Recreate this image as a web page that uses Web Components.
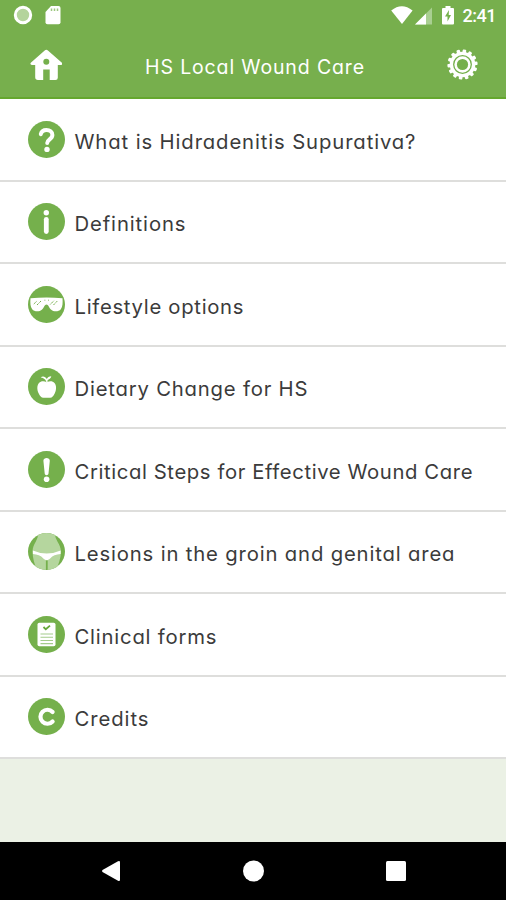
<!DOCTYPE html>
<html lang="en"><head><meta charset="utf-8"><title>HS Local Wound Care</title>
<style>
html,body{margin:0;height:100%}
body{font-family:Inter,"Liberation Sans",sans-serif;background:#ebf1e5;overflow:hidden}
</style></head><body>
<wound-app></wound-app>
<script>
// Text whose letter-spacing is adjusted so that it spans a given width.
class FitText extends HTMLElement{
  connectedCallback(){
    const r=this.attachShadow({mode:'open'});
    r.innerHTML='<style>:host{display:block;white-space:nowrap;font-feature-settings:"cv11" 1,"calt" 0;line-height:1.2}span{display:inline-block}</style><span><slot></slot></span>';
    const s=r.querySelector('span'),n=this.textContent.length;
    const w=s.getBoundingClientRect().width;
    s.style.letterSpacing=((+this.getAttribute('width')-w)/(n-1)).toFixed(3)+'px';
  }
}
const ICONS={
question:'<path d="M12.8 13.200c.6-2.800 3-4.200 5.700-4.200 3.300 0 5.900 1.900 5.900 4.900 0 4.400-5.200 4.400-5.200 8.100" fill="none" stroke="#fff" stroke-width="4" stroke-linecap="round"/><circle cx="19" cy="28.400" r="2.700" fill="#fff"/>',
info:'<circle cx="18.300" cy="9.800" r="2.700" fill="#fff"/><path d="M18.300 16.300v12.300" stroke="#fff" stroke-width="4.800" stroke-linecap="round"/>',
glasses:'<path d="M2.500 12.200q16-1.300 32 0c.3 4.600.3 8.500-1.700 11-2.200 2.700-7.300 2.700-9.900.2-2-2-2.500-5-4.400-5s-2.400 3-4.400 5c-2.600 2.500-7.700 2.500-9.900-.2-2-2.500-2-6.400-1.700-11z" fill="#fff"/><path d="M5.800 18l3.200-3M9 19l4-4M22.200 18.500l3.600-3.700M25.500 19l3.800-4M16.500 14.200h.8M20 14.200h.8" stroke="#75b04c" stroke-width="1" stroke-dasharray="1.500 .6"/>',
apple:'<path d="M18.800 14.300c2.800-1.600 5.900-1.400 7.700.7 2.200 2.500 1.900 7.100.3 10.300-1.400 2.800-2.700 4.500-4.600 4.500h-6.900c-2 0-3.300-1.700-4.700-4.500-1.600-3.200-1.900-7.800.4-10.300 1.800-2 5-2.300 7.800-.7z" fill="#fff"/><path d="M18.500 14.800c-.2-2-1.700-4.600-5.800-5.200 1.800-1.900 4.900-.9 6.100 1.500.7-1.700 2.100-2.900 4.500-2.900-.4 2.400-2.400 3.300-3.700 3.900v2.700z" fill="#fff"/>',
alert:'<path d="M15.400 9.700c0-3.700 6.400-3.700 6.400 0l-1.300 12.700c-.2 2.300-3.600 2.300-3.800 0z" fill="#fff"/><circle cx="18.600" cy="28.300" r="2.800" fill="#fff"/>',
groin:'<clipPath id="c"><circle cx="18.500" cy="18.500" r="18.500"/></clipPath><g clip-path="url(#c)"><path d="M10 0c.8 7-5.400 10.500-5.400 18.500 0 7 1.900 13 4.400 18.500h19c2.500-5.500 4.900-11.500 4.900-18.500C32.900 10.500 26.300 7 27.100 0z" fill="#b5d69e"/><path d="M4.900 17.400q13.800 6.200 27.700 0v3.700c-4.400.3-8.200 1.600-10.200 4.100-2 2.400-5.300 2.400-7.300 0-2-2.500-5.900-4-10.200-4.300z" fill="#fff"/><path d="M18.800 27.500V37" stroke="#75b04c" stroke-width="1.800"/></g>',
form:'<rect x="9.500" y="6.800" width="18" height="23.500" rx="1.800" fill="#fff"/><path d="M15.500 11l2.300 2.300 4.200-3.700" fill="none" stroke="#64a838" stroke-width="1.800"/><path d="M12.500 18h12.500M12.500 21.300h12.500M12.500 24.500h12.500M12.500 27.600h12.500" stroke="#a4cc8b" stroke-width="1.100"/>',
credit:'<path d="M24.600 14A7 7 0 1 0 24.600 23.500" fill="none" stroke="#fff" stroke-width="4.200" stroke-linecap="round"/>'
};
class MenuIcon extends HTMLElement{
  connectedCallback(){
    this.attachShadow({mode:'open'}).innerHTML='<style>:host{display:block;width:37px;height:37px;flex:none}svg{display:block}</style><svg width="37" height="37" viewBox="0 0 37 37"><circle cx="18.500" cy="18.500" r="18.500" fill="#75b04c"/>'+ICONS[this.getAttribute('name')]+'</svg>';
  }
}
class MenuRow extends HTMLElement{
  connectedCallback(){
    this.attachShadow({mode:'open'}).innerHTML=`<style>:host{display:flex;box-sizing:border-box;height:82.5px;padding:0 0 0 27.500px;align-items:center;gap:10px;background:#fff;border-bottom:2px solid #dededc;color:#3b3b3b;font-size:20.300px}fit-text{padding-top:5px}</style><menu-icon name="${this.getAttribute('icon')}"></menu-icon><fit-text width="${this.getAttribute('width')}">${this.textContent}</fit-text>`;
  }
}
class StatusBar extends HTMLElement{
  connectedCallback(){
    this.attachShadow({mode:'open'}).innerHTML=`<style>:host{display:flex;box-sizing:border-box;height:32px;padding:0 10px 2px 13px;align-items:center;justify-content:space-between;color:#fff}div{display:flex;align-items:center}svg{display:block}fit-text{font:500 18px Roboto,sans-serif}</style>
<div style="gap:12px"><svg width="20" height="20"><circle cx="10" cy="10" r="7.700" fill="#b4d49c" stroke="#fff" stroke-width="3"/></svg>
<svg width="17" height="20"><path d="M6 1h7.500q2 0 2 2v14.300q0 2-2 2H2.500q-2 0-2-2V7z" fill="#fff"/><path d="M6.500 3.500v2.500M9.500 3.500v2.500M12.500 3.500v2.500" stroke="#9dc880" stroke-width="1.500"/></svg></div>
<div><svg width="22" height="20"><path d="M.2 5.500Q10.800-3 21.600 5.500L11 19z" fill="#fff"/></svg>
<svg width="17" height="19" style="margin-left:2px"><path d="M0 18.500L17 1.500v17z" fill="#a9cf91"/><path d="M0 18.500L11 7.500v11z" fill="#fff"/></svg>
<svg width="12" height="20" style="margin-left:10px"><path d="M3.500 1h5v2H11q1 0 1 1v14.500q0 1-1 1H1q-1 0-1-1V4q0-1 1-1h2.500z" fill="#fff"/><path d="M7 5L3 11.500h2.500v5L9 10H6.700z" fill="#75b04c"/></svg>
<fit-text width="34" style="margin-left:8px">2:41</fit-text></div>`;
  }
}
class AppToolbar extends HTMLElement{
  connectedCallback(){
    let g='';for(let i=0;i<14;i++)g+=`<rect x="13.700" y=".4" width="3.600" height="5" rx="1" transform="rotate(${i*360/14+8} 15.500 15.500)"/>`;
    this.attachShadow({mode:'open'}).innerHTML=`<style>:host{display:flex;box-sizing:border-box;height:67px;padding:0 28px 0 30px;align-items:center;justify-content:space-between;border-bottom:2px solid #65a72e;color:#fff;font-size:19.500px}svg{display:block}fit-text{padding:6px 0 0 1px}</style>
<svg width="32" height="32" viewBox="0 0 32 32"><path d="M14.700 1.500q1.600-1.300 3.200 0l14 12.200q1 2-1.300 2.300h-2.800v12.700q0 2.300-2.300 2.300h-5.800V20.500h-6.500V31H8q-2.800 0-2.800-2.700V16H2q-2.500-.3-1.200-2.300z" fill="#fff"/><circle cx="16.300" cy="12.700" r="3" fill="#75b04c"/></svg>
<fit-text width="219">HS Local Wound Care</fit-text>
<svg width="31" height="31"><g fill="#fff">${g}<circle cx="15.500" cy="15.500" r="12.800"/></g><g fill="none" stroke="#75b04c" stroke-width="1.300"><circle cx="15.500" cy="15.500" r="8.800"/></g><circle cx="15.500" cy="15.500" r="5.600" fill="#75b04c"/></svg>`;
  }
}
class NavBar extends HTMLElement{
  connectedCallback(){
    this.attachShadow({mode:'open'}).innerHTML=`<style>:host{display:flex;box-sizing:border-box;height:58px;padding:0 100px 0 101px;align-items:center;justify-content:space-between;background:#000}svg{display:block}</style>
<svg width="20" height="22"><path d="M1.500 10L17 1.200q2-.9 2 1v17.600q0 1.900-2 1L1.500 12q-1-1 0-2z" fill="#fff"/></svg>
<svg width="22" height="22"><circle cx="10.500" cy="11" r="10.500" fill="#fff"/></svg>
<svg width="20" height="20"><rect width="20" height="20" rx="1.500" fill="#fff"/></svg>`;
  }
}
class WoundApp extends HTMLElement{
  connectedCallback(){
    this.attachShadow({mode:'open'}).innerHTML=`<style>:host{display:flex;flex-direction:column;width:506px;height:900px}header{background:#77af4d;flex:none}main{flex:1}</style>
<header><status-bar></status-bar><app-toolbar></app-toolbar></header>
<main>
<menu-row icon="question" width="341">What is Hidradenitis Supurativa?</menu-row>
<menu-row icon="info" width="111">Definitions</menu-row>
<menu-row icon="glasses" width="169">Lifestyle options</menu-row>
<menu-row icon="apple" width="233">Dietary Change for HS</menu-row>
<menu-row icon="alert" width="398">Critical Steps for Effective Wound Care</menu-row>
<menu-row icon="groin" width="380">Lesions in the groin and genital area</menu-row>
<menu-row icon="form" width="142">Clinical forms</menu-row>
<menu-row icon="credit" width="74">Credits</menu-row>
</main><nav-bar></nav-bar>`;
  }
}
customElements.define('fit-text',FitText);
customElements.define('menu-icon',MenuIcon);
customElements.define('menu-row',MenuRow);
customElements.define('status-bar',StatusBar);
customElements.define('app-toolbar',AppToolbar);
customElements.define('nav-bar',NavBar);
customElements.define('wound-app',WoundApp);
</script></body></html>
